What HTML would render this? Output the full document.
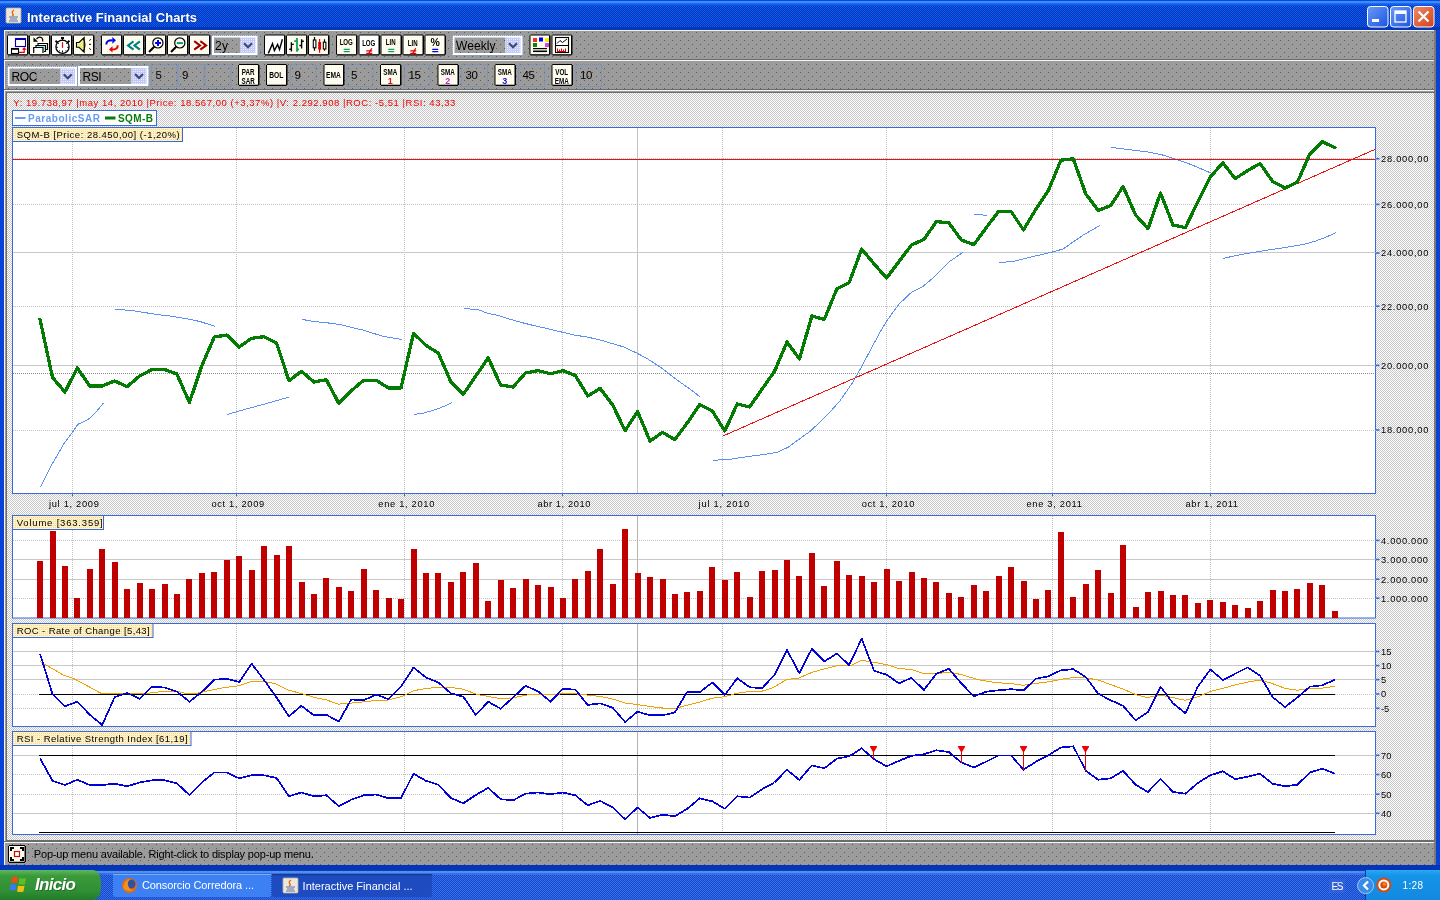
<!DOCTYPE html><html><head><meta charset="utf-8"><title>Interactive Financial Charts</title>
<style>html,body{margin:0;padding:0;width:1440px;height:900px;overflow:hidden;background:#0842d8}svg{position:absolute;left:0;top:0;display:block;will-change:transform}text{font-family:"Liberation Sans",sans-serif;}</style></head><body>
<svg width="1440" height="900" viewBox="0 0 1440 900">
<defs>
<pattern id="tb" width="8" height="8" patternUnits="userSpaceOnUse"><rect width="8" height="8" fill="#9b9b9b"/><rect x="0" y="0" width="1" height="1" fill="#5a5a5a"/><rect x="4" y="4" width="1" height="1" fill="#5a5a5a"/></pattern>
<pattern id="lt" width="2" height="2" patternUnits="userSpaceOnUse"><rect width="2" height="2" fill="#ffffff"/><rect x="0" y="0" width="1" height="1" fill="#c6c6c6"/><rect x="1" y="1" width="1" height="1" fill="#c6c6c6"/></pattern>
<pattern id="cr" width="2" height="2" patternUnits="userSpaceOnUse"><rect width="2" height="2" fill="#ffffff"/><rect x="1" y="1" width="1" height="1" fill="#fdf8c0"/></pattern>
<pattern id="lb" width="2" height="2" patternUnits="userSpaceOnUse"><rect width="2" height="2" fill="#fff2c4"/><rect x="1" y="1" width="1" height="1" fill="#f5d9a0"/></pattern>
<pattern id="lv" width="2" height="2" patternUnits="userSpaceOnUse"><rect width="2" height="2" fill="#c4c8f4"/><rect x="1" y="1" width="1" height="1" fill="#e8ecff"/></pattern>
<linearGradient id="title" x1="0" y1="0" x2="0" y2="1"><stop offset="0" stop-color="#3d8cf5"/><stop offset="0.12" stop-color="#0a5ce8"/><stop offset="0.5" stop-color="#0650e0"/><stop offset="0.85" stop-color="#0a56e6"/><stop offset="1" stop-color="#0846d0"/></linearGradient>
<linearGradient id="task" x1="0" y1="0" x2="0" y2="1"><stop offset="0" stop-color="#3f8cf3"/><stop offset="0.15" stop-color="#2863e0"/><stop offset="0.6" stop-color="#245edb"/><stop offset="1" stop-color="#1d50c8"/></linearGradient>
<linearGradient id="start" x1="0" y1="0" x2="0" y2="1"><stop offset="0" stop-color="#5fb85f"/><stop offset="0.2" stop-color="#3a9a3a"/><stop offset="0.7" stop-color="#2f8f35"/><stop offset="1" stop-color="#237a28"/></linearGradient>
<linearGradient id="tray" x1="0" y1="0" x2="0" y2="1"><stop offset="0" stop-color="#2aa8f0"/><stop offset="0.2" stop-color="#1494e8"/><stop offset="1" stop-color="#1289e0"/></linearGradient>
<linearGradient id="btnb" x1="0" y1="0" x2="1" y2="1"><stop offset="0" stop-color="#6a9af8"/><stop offset="1" stop-color="#1c54e0"/></linearGradient>
<linearGradient id="btnr" x1="0" y1="0" x2="1" y2="1"><stop offset="0" stop-color="#f08a6a"/><stop offset="1" stop-color="#d24018"/></linearGradient>
<pattern id="tp" width="2" height="2" patternUnits="userSpaceOnUse"><rect width="2" height="2" fill="#0a5cf4"/><rect x="1" y="0" width="1" height="1" fill="#0434b4"/><rect x="0" y="1" width="1" height="1" fill="#0434b4"/></pattern>
<pattern id="kp" width="2" height="2" patternUnits="userSpaceOnUse"><rect width="2" height="2" fill="#3470ec"/><rect x="1" y="0" width="1" height="1" fill="#1848c8"/><rect x="0" y="1" width="1" height="1" fill="#1848c8"/></pattern>
</defs>
<rect x="0" y="0" width="1440" height="870" fill="#0842d8"/>
<rect x="0" y="0" width="1440" height="30" fill="url(#tp)"/>
<rect x="0" y="0" width="1440" height="1" fill="#0a48d8"/>
<rect x="0" y="1" width="1440" height="2.5" fill="#3a8cff"/>
<rect x="0" y="3.5" width="1440" height="2" fill="#1a6af8" opacity="0.6"/>
<rect x="0" y="27" width="1440" height="3" fill="#0436b8"/>
<rect x="6" y="8" width="15" height="15" rx="1" fill="#ece8dc" stroke="#b8b0a0" stroke-width="0.8"/>
<path d="M14 10 q-3 2 -1 4 q1 1 -1 2" stroke="#e06010" stroke-width="1.3" fill="none"/>
<path d="M9 17 h9 M10 19 h7 M9 21 h9" stroke="#5060a0" stroke-width="0.9"/>
<text x="28" y="22" font-size="13" font-weight="bold" fill="#0a2a80" opacity="0.6" textLength="170" lengthAdjust="spacing">Interactive Financial Charts</text>
<text x="27" y="21.5" font-size="13" font-weight="bold" fill="#ffffff" textLength="170" lengthAdjust="spacing">Interactive Financial Charts</text>
<rect x="1367.5" y="6.5" width="20.5" height="20.5" rx="3" fill="url(#btnb)" stroke="#ffffff" stroke-width="1"/>
<rect x="1390.5" y="6.5" width="20.5" height="20.5" rx="3" fill="url(#btnb)" stroke="#ffffff" stroke-width="1"/>
<rect x="1413.5" y="6.5" width="20.5" height="20.5" rx="3" fill="url(#btnr)" stroke="#ffffff" stroke-width="1"/>
<rect x="1372" y="19" width="7" height="3" fill="#fff"/>
<rect x="1395" y="11" width="11" height="11" fill="none" stroke="#fff" stroke-width="1.3"/><rect x="1395" y="11" width="11" height="3" fill="#fff"/>
<path d="M1418.5 11.5 L1428.5 21.5 M1428.5 11.5 L1418.5 21.5" stroke="#fff" stroke-width="2.2"/>
<rect x="4" y="30" width="1432" height="835" fill="url(#tb)"/>
<rect x="4" y="30" width="1432" height="1" fill="#f4f4f4"/>
<rect x="4" y="30" width="1" height="835" fill="#f4f4f4"/>
<rect x="4" y="59" width="1432" height="1" fill="#6c6c6c"/>
<rect x="4" y="60" width="1432" height="1" fill="#f4f4f4"/>
<rect x="4" y="89" width="1432" height="1" fill="#6c6c6c"/>
<rect x="4" y="90" width="1432" height="1" fill="#f4f4f4"/>
<rect x="6" y="92" width="1429" height="749" fill="#6c6c6c"/>
<rect x="7" y="93" width="1427" height="747" fill="url(#lt)"/>
<rect x="4" y="841" width="1432" height="1" fill="#6c6c6c"/>
<rect x="4" y="842" width="1432" height="1" fill="#f4f4f4"/>
<rect x="1434" y="30" width="2" height="835" fill="#7a7a7a"/>
<path d="M8 34.5 H27.5 V35.5 H28.5 V54.5 H27.5 V55.5 H8 V54.5 H7 V35.5 H8z" fill="#000"/>
<rect x="8" y="35.5" width="19.0" height="18.7" fill="#ffffff"/>
<path d="M30 34.5 H49.5 V35.5 H50.5 V54.5 H49.5 V55.5 H30 V54.5 H29 V35.5 H30z" fill="#000"/>
<rect x="30" y="35.5" width="19.0" height="18.7" fill="url(#cr)"/>
<path d="M52 34.5 H71.5 V35.5 H72.5 V54.5 H71.5 V55.5 H52 V54.5 H51 V35.5 H52z" fill="#000"/>
<rect x="52" y="35.5" width="19.0" height="18.7" fill="#ffffff"/>
<path d="M74 34.5 H93.5 V35.5 H94.5 V54.5 H93.5 V55.5 H74 V54.5 H73 V35.5 H74z" fill="#000"/>
<rect x="74" y="35.5" width="19.0" height="18.7" fill="url(#cr)"/>
<path d="M102 34.5 H121.5 V35.5 H122.5 V54.5 H121.5 V55.5 H102 V54.5 H101 V35.5 H102z" fill="#000"/>
<rect x="102" y="35.5" width="19.0" height="18.7" fill="url(#cr)"/>
<path d="M124 34.5 H143.5 V35.5 H144.5 V54.5 H143.5 V55.5 H124 V54.5 H123 V35.5 H124z" fill="#000"/>
<rect x="124" y="35.5" width="19.0" height="18.7" fill="url(#cr)"/>
<path d="M146 34.5 H165.5 V35.5 H166.5 V54.5 H165.5 V55.5 H146 V54.5 H145 V35.5 H146z" fill="#000"/>
<rect x="146" y="35.5" width="19.0" height="18.7" fill="url(#cr)"/>
<path d="M168 34.5 H187.5 V35.5 H188.5 V54.5 H187.5 V55.5 H168 V54.5 H167 V35.5 H168z" fill="#000"/>
<rect x="168" y="35.5" width="19.0" height="18.7" fill="url(#cr)"/>
<path d="M190 34.5 H209.5 V35.5 H210.5 V54.5 H209.5 V55.5 H190 V54.5 H189 V35.5 H190z" fill="#000"/>
<rect x="190" y="35.5" width="19.0" height="18.7" fill="url(#cr)"/>
<rect x="15.5" y="38.5" width="10" height="8" fill="#fff" stroke="#0000b0" stroke-width="1.1"/><rect x="15" y="38" width="11" height="2" fill="#0000b0"/>
<rect x="11.5" y="48.5" width="7" height="5" fill="#fff" stroke="#000" stroke-width="1.1"/><rect x="11" y="48" width="8" height="1.8" fill="#000"/>
<path d="M19 52.3 H24.2 V48.5" stroke="#e00000" stroke-width="1.2" fill="none"/><path d="M22 49.8 L24.2 47 L26.6 49.8z" fill="#e00000"/>
<path d="M33.5 37.2 V41.7 H38z" fill="#000"/><path d="M36.5 39 Q39 36 42 38 Q43 39 42.7 41.6" stroke="#000" stroke-width="1.2" fill="none"/>
<path d="M38 49.5 V43.5 H47.5 V49.5 H46" stroke="#000" stroke-width="1.2" fill="none"/>
<path d="M36 51.5 V45.5 H45.5 V51.5 H44" stroke="#000" stroke-width="1.2" fill="#fff"/><path d="M37.5 46.8 H44.2 V50.5" stroke="#50f0f0" stroke-width="1" fill="none"/>
<path d="M33.7 52.9 V47.5 H43 V52.9" stroke="#000" stroke-width="1.2" fill="#fff"/>
<circle cx="62.5" cy="46.8" r="6.6" fill="#fff" stroke="#000" stroke-width="1.3"/>
<rect x="61" y="37" width="3" height="2" fill="#000"/><path d="M62.5 39 V40.5" stroke="#000" stroke-width="1"/>
<path d="M55.5 40.8 L57.8 42.8 M69.5 40.8 L67.2 42.8" stroke="#000" stroke-width="1.8"/>
<path d="M62.5 42.2 V47.8" stroke="#f00000" stroke-width="1.2"/>
<path d="M56 47.3 H57.8 M67.2 47.3 H69 M62.5 50.5 V52.3 M58.2 43.5 h0.8 M66 43.5 h0.8 M59 50.8 h0.8 M65.5 50.8 h0.8" stroke="#000" stroke-width="1"/>
<path d="M76.5 42.5 H79 L84.2 37.6 V52.2 L79 47.3 H76.5z" fill="#f0f080" stroke="#000" stroke-width="1.1"/>
<path d="M83 38 Q87 44.8 83 51.8" stroke="#000" stroke-width="1" fill="none"/>
<path d="M89.3 40.6 L90.9 39.3 M89 44.3 H91 M89.3 48.3 L90.9 49.7" stroke="#000" stroke-width="1"/>
<path d="M106.4 44.5 Q106 40.2 112.5 40.3" stroke="#0000f0" stroke-width="2" fill="none"/><path d="M112.3 37 L116 40.3 L112.3 43.7z" fill="#0000f0"/>
<path d="M117.7 45.2 Q118 49.5 112 49.5" stroke="#f00000" stroke-width="2" fill="none"/><path d="M112.5 46 L109 49.4 L112.5 52.6z" fill="#f00000"/>
<path d="M133.5 41.3 L128 45.4 L133.5 49.7 M139.9 41.3 L134.4 45.4 L139.9 49.7" stroke="#008080" stroke-width="2.1" fill="none" stroke-linejoin="miter"/>
<circle cx="157.9" cy="42.9" r="5.1" fill="#fff" stroke="#000" stroke-width="1.2"/><path d="M149 52 L154.2 46.8" stroke="#000" stroke-width="2"/><path d="M155.1 43.1 H161 M158 40 V45.9" stroke="#0000f0" stroke-width="2"/>
<circle cx="179.8" cy="42.9" r="5.1" fill="#fff" stroke="#000" stroke-width="1.2"/><path d="M171 52 L176.2 46.8" stroke="#000" stroke-width="2"/><path d="M176.8 43.1 H182.9" stroke="#10a050" stroke-width="2"/>
<path d="M194.2 41.2 L200 45.4 L194.2 49.7 M200.3 41.2 L206.1 45.4 L200.3 49.7" stroke="#a00000" stroke-width="2.1" fill="none"/>
<rect x="212" y="35.5" width="45.5" height="19.5" fill="#ffffff"/>
<rect x="211.5" y="35.0" width="46.5" height="20.5" fill="none" stroke="#7aa0d8" stroke-width="1" stroke-dasharray="1 1" shape-rendering="crispEdges"/>
<rect x="214" y="37.5" width="26.5" height="15.5" fill="url(#tb)"/>
<rect x="240.5" y="37.5" width="15.0" height="15.5" fill="url(#lv)"/>
<path d="M244.0 43.25 L248.0 47.25 L252.0 43.25" stroke="#3c4a78" stroke-width="2.2" fill="none"/>
<text x="215" y="49.5" font-size="12" fill="#000" font-weight="normal" text-anchor="start" textLength="13" lengthAdjust="spacing">2y</text>
<path d="M265 34.5 H284.5 V35.5 H285.5 V54.5 H284.5 V55.5 H265 V54.5 H264 V35.5 H265z" fill="#000"/>
<rect x="265" y="35.5" width="19.0" height="18.7" fill="#ffffff"/>
<path d="M287 34.5 H306.5 V35.5 H307.5 V54.5 H306.5 V55.5 H287 V54.5 H286 V35.5 H287z" fill="#000"/>
<rect x="287" y="35.5" width="19.0" height="18.7" fill="url(#cr)"/>
<path d="M309 34.5 H328.5 V35.5 H329.5 V54.5 H328.5 V55.5 H309 V54.5 H308 V35.5 H309z" fill="#000"/>
<rect x="309" y="35.5" width="19.0" height="18.7" fill="url(#cr)"/>
<path d="M337 34.5 H356.5 V35.5 H357.5 V54.5 H356.5 V55.5 H337 V54.5 H336 V35.5 H337z" fill="#000"/>
<rect x="337" y="35.5" width="19.0" height="18.7" fill="url(#cr)"/>
<path d="M359.5 34.5 H379 V35.5 H380 V54.5 H379 V55.5 H359.5 V54.5 H358.5 V35.5 H359.5z" fill="#000"/>
<rect x="359.5" y="35.5" width="19.0" height="18.7" fill="#ffffff"/>
<path d="M381.5 34.5 H401 V35.5 H402 V54.5 H401 V55.5 H381.5 V54.5 H380.5 V35.5 H381.5z" fill="#000"/>
<rect x="381.5" y="35.5" width="19.0" height="18.7" fill="url(#cr)"/>
<path d="M403.5 34.5 H423 V35.5 H424 V54.5 H423 V55.5 H403.5 V54.5 H402.5 V35.5 H403.5z" fill="#000"/>
<rect x="403.5" y="35.5" width="19.0" height="18.7" fill="url(#cr)"/>
<path d="M425.5 34.5 H445 V35.5 H446 V54.5 H445 V55.5 H425.5 V54.5 H424.5 V35.5 H425.5z" fill="#000"/>
<rect x="425.5" y="35.5" width="19.0" height="18.7" fill="url(#cr)"/>
<polyline points="268.3,53.4 272.5,43.7 274.4,50.5 277.6,44.4 279.5,49.5 282.4,39.3" stroke="#000" stroke-width="1.4" fill="none"/>
<path d="M291.4 42.2 V51.4 M289.2 49.3 H291.4 M291.4 44.4 H293.8 M301.6 39.3 V48.5 M299.4 45.5 H301.6 M301.6 41.2 H303.8" stroke="#000" stroke-width="1.4"/>
<path d="M297 38.1 V51.7 M294.2 41.2 H297 M297 49.3 H299" stroke="#10a050" stroke-width="1.8"/>
<path d="M314.5 37.1 V50.7 M324.5 39.3 V50.7" stroke="#000" stroke-width="1.2"/><path d="M319.6 39 V52.7" stroke="#e00000" stroke-width="1.2"/>
<rect x="313.3" y="40" width="2.6" height="7.8" fill="#fff" stroke="#000" stroke-width="1.1"/><rect x="318.2" y="42" width="2.9" height="7.7" fill="#e00000"/><rect x="323.3" y="42.2" width="2.6" height="6.8" fill="#fff" stroke="#000" stroke-width="1.1"/>
<text transform="translate(346.25 44.9) scale(0.72 1)" font-size="8.5" font-weight="bold" text-anchor="middle" fill="#000">LOG</text>
<path d="M343.75 49.3 h6 M343.75 51.7 h6" stroke="#10a050" stroke-width="1.3"/>
<text transform="translate(368.75 45.9) scale(0.72 1)" font-size="8.5" font-weight="bold" text-anchor="middle" fill="#000">LOG</text>
<path d="M366.25 50.8 h6 M366.25 53.5 h6" stroke="#e00000" stroke-width="1.3"/>
<path d="M371.75 48.3 L368.75 53.6" stroke="#e00000" stroke-width="1.2"/>
<text transform="translate(390.75 44.9) scale(0.72 1)" font-size="8.5" font-weight="bold" text-anchor="middle" fill="#000">LIN</text>
<path d="M388.25 49.3 h6 M388.25 51.7 h6" stroke="#10a050" stroke-width="1.3"/>
<text transform="translate(412.75 45.9) scale(0.72 1)" font-size="8.5" font-weight="bold" text-anchor="middle" fill="#000">LIN</text>
<path d="M410.25 50.8 h6 M410.25 53.5 h6" stroke="#e00000" stroke-width="1.3"/>
<path d="M415.75 48.3 L412.75 53.6" stroke="#e00000" stroke-width="1.2"/>
<text x="435.25" y="45.5" font-size="10.5" fill="#000" font-weight="bold" text-anchor="middle">%</text>
<path d="M432.25 49.3 h6 M432.25 51.7 h6" stroke="#0000f0" stroke-width="1.3"/>
<rect x="452.5" y="35.5" width="70.0" height="19.5" fill="#ffffff"/>
<rect x="452.0" y="35.0" width="71.0" height="20.5" fill="none" stroke="#7aa0d8" stroke-width="1" stroke-dasharray="1 1" shape-rendering="crispEdges"/>
<rect x="454.5" y="37.5" width="51.0" height="15.5" fill="url(#tb)"/>
<rect x="505.5" y="37.5" width="15.0" height="15.5" fill="url(#lv)"/>
<path d="M509.0 43.25 L513.0 47.25 L517.0 43.25" stroke="#3c4a78" stroke-width="2.2" fill="none"/>
<text x="456" y="50" font-size="12" fill="#000" font-weight="normal" text-anchor="start" textLength="39.5" lengthAdjust="spacing">Weekly</text>
<path d="M530.5 34.5 H549.5 V35.5 H550.5 V54.5 H549.5 V55.5 H530.5 V54.5 H529.5 V35.5 H530.5z" fill="#000"/>
<rect x="530.5" y="35.5" width="18.5" height="18.7" fill="url(#cr)"/>
<rect x="533" y="38" width="4" height="4" fill="#f03030"/><rect x="539" y="37.5" width="4" height="4" fill="#0000f0"/><rect x="545" y="38" width="4" height="4" fill="#f0f000"/><rect x="533" y="43" width="4" height="4" fill="#108010"/><rect x="545" y="43" width="4" height="4" fill="#e040f0"/>
<rect x="533" y="48" width="14" height="1.2" fill="#000"/><rect x="533" y="50.5" width="14" height="1.6" fill="#000"/>
<path d="M552.5 34.5 H571.5 V35.5 H572.5 V54.5 H571.5 V55.5 H552.5 V54.5 H551.5 V35.5 H552.5z" fill="#000"/>
<rect x="552.5" y="35.5" width="18.5" height="18.7" fill="url(#cr)"/>
<rect x="555.5" y="37.5" width="13" height="15" fill="#fff" stroke="#000" stroke-width="1.1"/><path d="M555.5 45.5 h13" stroke="#000" stroke-width="1"/><path d="M557 43.5 l3 -3 l2.5 2 l4.5 -3.5" stroke="#000" stroke-width="1" fill="none"/><path d="M557.5 51.5 v-3 M559.5 51.5 v-2 M561.5 51.5 v-3 M563.5 51.5 v-2 M565.5 51.5 v-3 M557 51.5 h9" stroke="#e00000" stroke-width="1"/>
<rect x="7.5" y="66.5" width="69.5" height="19.5" fill="#ffffff"/>
<rect x="7.0" y="66.0" width="70.5" height="20.5" fill="none" stroke="#7aa0d8" stroke-width="1" stroke-dasharray="1 1" shape-rendering="crispEdges"/>
<rect x="9.5" y="68.5" width="51.0" height="15.5" fill="url(#tb)"/>
<rect x="60.5" y="68.5" width="14.5" height="15.5" fill="url(#lv)"/>
<path d="M63.75 74.25 L67.75 78.25 L71.75 74.25" stroke="#3c4a78" stroke-width="2.2" fill="none"/>
<text x="11.5" y="80.6" font-size="12" fill="#000" font-weight="normal" text-anchor="start" textLength="26" lengthAdjust="spacing">ROC</text>
<rect x="78" y="66" width="70.5" height="20" fill="#ffffff"/>
<rect x="77.5" y="65.5" width="71.5" height="21" fill="none" stroke="#7aa0d8" stroke-width="1" stroke-dasharray="1 1" shape-rendering="crispEdges"/>
<rect x="80" y="68" width="51.5" height="16" fill="url(#tb)"/>
<rect x="131.5" y="68" width="15.0" height="16" fill="url(#lv)"/>
<path d="M135.0 74.0 L139.0 78.0 L143.0 74.0" stroke="#3c4a78" stroke-width="2.2" fill="none"/>
<text x="82.5" y="80.6" font-size="12" fill="#000" font-weight="normal" text-anchor="start" textLength="19" lengthAdjust="spacing">RSI</text>
<rect x="151.5" y="64.5" width="25.5" height="22" fill="none" stroke="#6a8cc8" stroke-width="1" stroke-dasharray="1 1"/>
<text x="155.5" y="78.8" font-size="11.5" fill="#000" font-weight="normal" text-anchor="start">5</text>
<rect x="178.0" y="64.5" width="26.0" height="22" fill="none" stroke="#6a8cc8" stroke-width="1" stroke-dasharray="1 1"/>
<text x="182.0" y="78.8" font-size="11.5" fill="#000" font-weight="normal" text-anchor="start">9</text>
<rect x="205.0" y="64.5" width="26.0" height="22" fill="none" stroke="#6a8cc8" stroke-width="1" stroke-dasharray="1 1"/>
<path d="M239 64 H258.5 V65 H259.5 V85 H258.5 V86 H239 V85 H238 V65 H239z" fill="#000"/>
<rect x="239" y="65" width="19.0" height="19.7" fill="url(#cr)"/>
<text transform="translate(248.25 74.8) scale(0.7 1)" font-size="9" font-weight="bold" text-anchor="middle" fill="#000">PAR</text>
<text transform="translate(248.25 83.5) scale(0.7 1)" font-size="9" font-weight="bold" text-anchor="middle" fill="#000">SAR</text>
<path d="M267 64 H286.5 V65 H287.5 V85 H286.5 V86 H267 V85 H266 V65 H267z" fill="#000"/>
<rect x="267" y="65" width="19.0" height="19.7" fill="url(#cr)"/>
<text transform="translate(276.25 77.9) scale(0.7 1)" font-size="9.5" font-weight="bold" text-anchor="middle" fill="#000">BOL</text>
<rect x="290.5" y="64.5" width="25.5" height="22" fill="none" stroke="#6a8cc8" stroke-width="1" stroke-dasharray="1 1"/>
<text x="294.5" y="78.8" font-size="11.5" fill="#000" font-weight="normal" text-anchor="start">9</text>
<path d="M324.5 64 H343.5 V65 H344.5 V85 H343.5 V86 H324.5 V85 H323.5 V65 H324.5z" fill="#000"/>
<rect x="324.5" y="65" width="18.5" height="19.7" fill="url(#cr)"/>
<text transform="translate(333.5 77.9) scale(0.7 1)" font-size="9.5" font-weight="bold" text-anchor="middle" fill="#000">EMA</text>
<rect x="347.0" y="64.5" width="26.0" height="22" fill="none" stroke="#6a8cc8" stroke-width="1" stroke-dasharray="1 1"/>
<text x="351.0" y="78.8" font-size="11.5" fill="#000" font-weight="normal" text-anchor="start">5</text>
<path d="M381 64 H400.5 V65 H401.5 V85 H400.5 V86 H381 V85 H380 V65 H381z" fill="#000"/>
<rect x="381" y="65" width="19.0" height="19.7" fill="url(#cr)"/>
<text transform="translate(390.25 74.8) scale(0.7 1)" font-size="9" font-weight="bold" text-anchor="middle" fill="#000">SMA</text>
<text transform="translate(390.25 83.5) scale(1.0 1)" font-size="9" font-weight="bold" text-anchor="middle" fill="#e01010">1</text>
<rect x="404.5" y="64.5" width="25.5" height="22" fill="none" stroke="#6a8cc8" stroke-width="1" stroke-dasharray="1 1"/>
<text x="408.5" y="78.8" font-size="11.5" fill="#000" font-weight="normal" text-anchor="start" textLength="12.5" lengthAdjust="spacing">15</text>
<path d="M438.5 64 H458 V65 H459 V85 H458 V86 H438.5 V85 H437.5 V65 H438.5z" fill="#000"/>
<rect x="438.5" y="65" width="19.0" height="19.7" fill="url(#cr)"/>
<text transform="translate(447.75 74.8) scale(0.7 1)" font-size="9" font-weight="bold" text-anchor="middle" fill="#000">SMA</text>
<text transform="translate(447.75 83.5) scale(1.0 1)" font-size="9" font-weight="bold" text-anchor="middle" fill="#d020d0">2</text>
<rect x="461.5" y="64.5" width="26" height="22" fill="none" stroke="#6a8cc8" stroke-width="1" stroke-dasharray="1 1"/>
<text x="465.5" y="78.8" font-size="11.5" fill="#000" font-weight="normal" text-anchor="start" textLength="12.5" lengthAdjust="spacing">30</text>
<path d="M495.5 64 H515 V65 H516 V85 H515 V86 H495.5 V85 H494.5 V65 H495.5z" fill="#000"/>
<rect x="495.5" y="65" width="19.0" height="19.7" fill="url(#cr)"/>
<text transform="translate(504.75 74.8) scale(0.7 1)" font-size="9" font-weight="bold" text-anchor="middle" fill="#000">SMA</text>
<text transform="translate(504.75 83.5) scale(1.0 1)" font-size="9" font-weight="bold" text-anchor="middle" fill="#1010e0">3</text>
<rect x="518.5" y="64.5" width="26" height="22" fill="none" stroke="#6a8cc8" stroke-width="1" stroke-dasharray="1 1"/>
<text x="522.5" y="78.8" font-size="11.5" fill="#000" font-weight="normal" text-anchor="start" textLength="12.5" lengthAdjust="spacing">45</text>
<path d="M552.5 64 H572 V65 H573 V85 H572 V86 H552.5 V85 H551.5 V65 H552.5z" fill="#000"/>
<rect x="552.5" y="65" width="19.0" height="19.7" fill="url(#cr)"/>
<text transform="translate(561.75 74.8) scale(0.7 1)" font-size="9" font-weight="bold" text-anchor="middle" fill="#000">VOL</text>
<text transform="translate(561.75 83.5) scale(0.7 1)" font-size="9" font-weight="bold" text-anchor="middle" fill="#000">EMA</text>
<rect x="576.0" y="64.5" width="25.5" height="22" fill="none" stroke="#6a8cc8" stroke-width="1" stroke-dasharray="1 1"/>
<text x="580.0" y="78.8" font-size="11.5" fill="#000" font-weight="normal" text-anchor="start" textLength="12.5" lengthAdjust="spacing">10</text>
<text x="13.3" y="106" font-size="9.5" fill="#f00000" font-weight="normal" text-anchor="start" textLength="442" lengthAdjust="spacing">Y: 19.738,97 |may 14, 2010 |Price: 18.567,00 (+3,37%) |V: 2.292.908 |ROC: -5,51 |RSI: 43,33</text>
<rect x="12.5" y="110.5" width="144" height="15" fill="#fff" stroke="#3a6ad8" stroke-width="1"/>
<rect x="15" y="117" width="10.5" height="2" fill="#6a9cf0"/>
<text x="28" y="121.8" font-size="10" fill="#6a9cf0" font-weight="bold" text-anchor="start" textLength="72" lengthAdjust="spacing">ParabolicSAR</text>
<rect x="105" y="116.5" width="10.5" height="3" fill="#0a7a0a"/>
<text x="118" y="121.8" font-size="10" fill="#0a7a0a" font-weight="bold" text-anchor="start" textLength="35" lengthAdjust="spacing">SQM-B</text>
<rect x="12.5" y="127.5" width="1363.0" height="366.0" fill="#ffffff" stroke="#3a6ad8" stroke-width="1"/>
<path d="M72.5 128 V493" stroke="#c2c2c2" stroke-width="1" stroke-dasharray="1 1" shape-rendering="crispEdges"/>
<path d="M236.5 128 V493" stroke="#c2c2c2" stroke-width="1" stroke-dasharray="1 1" shape-rendering="crispEdges"/>
<path d="M404.5 128 V493" stroke="#c2c2c2" stroke-width="1" stroke-dasharray="1 1" shape-rendering="crispEdges"/>
<path d="M562.5 128 V493" stroke="#c2c2c2" stroke-width="1" stroke-dasharray="1 1" shape-rendering="crispEdges"/>
<path d="M722.5 128 V493" stroke="#c2c2c2" stroke-width="1" stroke-dasharray="1 1" shape-rendering="crispEdges"/>
<path d="M886.5 128 V493" stroke="#c2c2c2" stroke-width="1" stroke-dasharray="1 1" shape-rendering="crispEdges"/>
<path d="M1052.5 128 V493" stroke="#c2c2c2" stroke-width="1" stroke-dasharray="1 1" shape-rendering="crispEdges"/>
<path d="M1210.5 128 V493" stroke="#c2c2c2" stroke-width="1" stroke-dasharray="1 1" shape-rendering="crispEdges"/>
<path d="M12.5 158.5 H1375.5" stroke="#c2c2c2" stroke-width="1" stroke-dasharray="1 1" shape-rendering="crispEdges"/>
<path d="M12.5 204.5 H1375.5" stroke="#c2c2c2" stroke-width="1" stroke-dasharray="1 1" shape-rendering="crispEdges"/>
<path d="M12.5 252.5 H1375.5" stroke="#c8c8c8" stroke-width="1" shape-rendering="crispEdges"/>
<path d="M12.5 306.5 H1375.5" stroke="#c2c2c2" stroke-width="1" stroke-dasharray="1 1" shape-rendering="crispEdges"/>
<path d="M12.5 365.5 H1375.5" stroke="#c8c8c8" stroke-width="1" shape-rendering="crispEdges"/>
<path d="M12.5 430.5 H1375.5" stroke="#c2c2c2" stroke-width="1" stroke-dasharray="1 1" shape-rendering="crispEdges"/>
<path d="M13 373.5 H1375" stroke="#888888" stroke-width="1" stroke-dasharray="1 1" shape-rendering="crispEdges"/>
<path d="M637.5 128 V493" stroke="#c4c4c4" stroke-width="1"/>
<polyline points="40.6,487.2 45.6,476.7 52.2,463.9 60.0,450.6 64.4,442.8 72.2,432.8 77.8,424.4 83.3,421.7 90.0,418.3 96.7,411.1 103.3,403.3" fill="none" stroke="#5b8ff0" stroke-width="1" shape-rendering="crispEdges"/>
<polyline points="115.0,309.4 130.8,310.4 144.2,312.5 159.2,314.8 169.2,315.8 181.7,317.9 191.7,319.6 200.8,321.8 208.3,324.2 215.4,326.5" fill="none" stroke="#5b8ff0" stroke-width="1" shape-rendering="crispEdges"/>
<polyline points="227.3,414.4 244.4,409.5 262.7,404.6 277.4,400.4 289.6,396.9" fill="none" stroke="#5b8ff0" stroke-width="1" shape-rendering="crispEdges"/>
<polyline points="302.3,319.4 312.3,321.3 321.7,322.3 332.3,323.4 341.7,325.0 352.3,327.7 361.7,329.7 372.3,333.0 383.0,336.3 393.7,338.1 401.7,339.4" fill="none" stroke="#5b8ff0" stroke-width="1" shape-rendering="crispEdges"/>
<polyline points="414.3,414.3 423.0,413.3 435.0,409.7 444.3,406.3 451.7,402.6" fill="none" stroke="#5b8ff0" stroke-width="1" shape-rendering="crispEdges"/>
<polyline points="464.2,308.5 478.3,309.7 487.1,313.1 498.7,315.5 509.4,319.0 521.1,322.4 532.7,325.3 545.4,328.2 561.9,332.1 574.5,335.2 585.0,336.6 598.5,339.5 612.1,343.5 623.8,347.0 637.3,353.3 648.2,359.3 658.1,365.6 668.0,372.9 677.1,380.1 688.8,388.2 700.5,397.2" fill="none" stroke="#5b8ff0" stroke-width="1" shape-rendering="crispEdges"/>
<polyline points="713.2,460.3 731.1,459.1 746.7,456.7 765.3,454.4 777.8,452.1 788.6,447.0 799.5,438.9 810.4,431.1 827.5,414.8 840.0,400.8 852.4,382.9 861.7,366.5 871.1,348.7 880.0,332.3 886.4,321.3 898.9,304.2 911.3,292.5 922.2,287.1 931.5,279.3 937.8,273.1 948.6,262.2 962.6,252.6" fill="none" stroke="#5b8ff0" stroke-width="1" shape-rendering="crispEdges"/>
<polyline points="974.3,214.3 981.3,214.8 986.7,215.6" fill="none" stroke="#5b8ff0" stroke-width="1" shape-rendering="crispEdges"/>
<polyline points="999.3,262.5 1013.3,261.4 1028.9,257.5 1052.2,252.1 1063.1,249.0 1070.9,243.5 1083.3,235.0 1099.6,225.6" fill="none" stroke="#5b8ff0" stroke-width="1" shape-rendering="crispEdges"/>
<polyline points="1110.9,147.4 1131.1,149.9 1146.7,151.8 1162.2,154.9 1174.6,158.8 1187.1,163.0 1199.5,168.1 1211.2,173.2" fill="none" stroke="#5b8ff0" stroke-width="1" shape-rendering="crispEdges"/>
<polyline points="1223.1,258.5 1234.3,255.9 1246.9,253.5 1258.6,251.5 1272.2,249.4 1287.7,247.1 1302.3,244.7 1315.0,241.3 1326.6,236.9 1335.9,232.6" fill="none" stroke="#5b8ff0" stroke-width="1" shape-rendering="crispEdges"/>
<path d="M13 159.5 H1375" stroke="#e81010" stroke-width="1" shape-rendering="crispEdges"/>
<path d="M723 436 L1375 149.4" stroke="#f01010" stroke-width="1" shape-rendering="crispEdges"/>
<polyline points="40.0,319.2 52.5,377.5 64.9,392.0 77.3,368.0 89.8,386.0 102.2,386.0 114.7,381.0 127.1,386.7 139.6,376.0 152.1,369.5 164.5,369.5 176.9,374.0 189.4,402.5 201.8,365.8 214.3,337.0 226.8,335.0 239.2,347.0 251.6,338.3 264.1,336.7 276.5,343.0 289.0,380.8 301.4,371.3 313.9,382.0 326.3,379.7 338.8,403.3 351.2,390.8 363.7,380.3 376.1,380.3 388.6,388.0 401.0,388.0 413.5,333.3 425.9,345.3 438.4,353.3 450.8,381.7 463.3,394.2 475.8,376.0 488.2,357.8 500.6,385.0 513.1,387.0 525.5,373.0 538.0,370.6 550.5,373.8 562.9,370.6 575.4,375.6 587.8,396.0 600.2,388.4 612.7,405.0 625.1,430.7 637.6,411.6 650.0,441.0 662.5,432.4 674.9,439.6 687.4,422.7 699.8,404.5 712.3,411.0 724.8,431.0 737.2,404.0 749.6,407.0 762.1,389.0 774.5,371.4 787.0,342.0 799.4,359.0 811.9,316.0 824.3,319.4 836.8,289.0 849.2,282.5 861.7,249.0 874.1,264.0 886.6,278.0 899.0,261.5 911.5,245.0 923.9,239.4 936.4,221.6 948.8,222.8 961.3,240.0 973.8,244.7 986.2,227.8 998.6,211.4 1011.1,211.4 1023.5,230.0 1036.0,208.9 1048.4,190.4 1060.9,160.2 1073.3,158.8 1085.8,194.0 1098.2,210.4 1110.7,205.6 1123.1,186.5 1135.6,215.0 1148.0,228.7 1160.5,193.0 1173.0,225.0 1185.4,227.6 1197.8,201.8 1210.3,177.0 1222.8,162.7 1235.2,178.7 1247.6,170.5 1260.1,163.6 1272.5,181.3 1285.0,188.0 1297.4,182.2 1309.9,153.8 1322.3,141.7 1334.8,147.6" fill="none" stroke="#047c04" stroke-width="3.3" stroke-linejoin="round" stroke-linecap="round" shape-rendering="crispEdges"/>
<rect x="12.5" y="127.5" width="170.0" height="14.0" fill="url(#lb)" stroke="#3a6ad8" stroke-width="1"/>
<text x="16.7" y="137.9" font-size="9.5" fill="#000" font-weight="normal" text-anchor="start" textLength="163" lengthAdjust="spacing">SQM-B [Price: 28.450,00] (-1,20%)</text>
<path d="M1375.5 158.7 h4" stroke="#3a6ad8" stroke-width="1.6"/>
<text x="1381" y="162.1" font-size="9.3" fill="#000" font-weight="normal" text-anchor="start" textLength="47.3" lengthAdjust="spacing">28.000,00</text>
<path d="M1375.5 204.4 h4" stroke="#3a6ad8" stroke-width="1.6"/>
<text x="1381" y="207.8" font-size="9.3" fill="#000" font-weight="normal" text-anchor="start" textLength="47.3" lengthAdjust="spacing">26.000,00</text>
<path d="M1375.5 253 h4" stroke="#3a6ad8" stroke-width="1.6"/>
<text x="1381" y="256.4" font-size="9.3" fill="#000" font-weight="normal" text-anchor="start" textLength="47.3" lengthAdjust="spacing">24.000,00</text>
<path d="M1375.5 306.2 h4" stroke="#3a6ad8" stroke-width="1.6"/>
<text x="1381" y="309.59999999999997" font-size="9.3" fill="#000" font-weight="normal" text-anchor="start" textLength="47.3" lengthAdjust="spacing">22.000,00</text>
<path d="M1375.5 365.4 h4" stroke="#3a6ad8" stroke-width="1.6"/>
<text x="1381" y="368.79999999999995" font-size="9.3" fill="#000" font-weight="normal" text-anchor="start" textLength="47.3" lengthAdjust="spacing">20.000,00</text>
<path d="M1375.5 430 h4" stroke="#3a6ad8" stroke-width="1.6"/>
<text x="1381" y="433.4" font-size="9.3" fill="#000" font-weight="normal" text-anchor="start" textLength="47.3" lengthAdjust="spacing">18.000,00</text>
<path d="M72.5 493.5 v3" stroke="#3a6ad8" stroke-width="1"/>
<text x="48.9" y="507" font-size="9.3" fill="#000" font-weight="normal" text-anchor="start" textLength="50" lengthAdjust="spacing">jul 1, 2009</text>
<path d="M236.5 493.5 v3" stroke="#3a6ad8" stroke-width="1"/>
<text x="211.4" y="507" font-size="9.3" fill="#000" font-weight="normal" text-anchor="start" textLength="52.8" lengthAdjust="spacing">oct 1, 2009</text>
<path d="M404.5 493.5 v3" stroke="#3a6ad8" stroke-width="1"/>
<text x="378.3" y="507" font-size="9.3" fill="#000" font-weight="normal" text-anchor="start" textLength="56" lengthAdjust="spacing">ene 1, 2010</text>
<path d="M562.5 493.5 v3" stroke="#3a6ad8" stroke-width="1"/>
<text x="537.5" y="507" font-size="9.3" fill="#000" font-weight="normal" text-anchor="start" textLength="52.8" lengthAdjust="spacing">abr 1, 2010</text>
<path d="M722.5 493.5 v3" stroke="#3a6ad8" stroke-width="1"/>
<text x="698.6" y="507" font-size="9.3" fill="#000" font-weight="normal" text-anchor="start" textLength="50.6" lengthAdjust="spacing">jul 1, 2010</text>
<path d="M886.5 493.5 v3" stroke="#3a6ad8" stroke-width="1"/>
<text x="861.7" y="507" font-size="9.3" fill="#000" font-weight="normal" text-anchor="start" textLength="52.7" lengthAdjust="spacing">oct 1, 2010</text>
<path d="M1052.5 493.5 v3" stroke="#3a6ad8" stroke-width="1"/>
<text x="1026.4" y="507" font-size="9.3" fill="#000" font-weight="normal" text-anchor="start" textLength="55.5" lengthAdjust="spacing">ene 3, 2011</text>
<path d="M1210.5 493.5 v3" stroke="#3a6ad8" stroke-width="1"/>
<text x="1185.6" y="507" font-size="9.3" fill="#000" font-weight="normal" text-anchor="start" textLength="52.4" lengthAdjust="spacing">abr 1, 2011</text>
<rect x="12.5" y="515.5" width="1363.0" height="102.5" fill="#ffffff" stroke="#3a6ad8" stroke-width="1"/>
<path d="M72.5 516 V618" stroke="#c2c2c2" stroke-width="1" stroke-dasharray="1 1" shape-rendering="crispEdges"/>
<path d="M236.5 516 V618" stroke="#c2c2c2" stroke-width="1" stroke-dasharray="1 1" shape-rendering="crispEdges"/>
<path d="M404.5 516 V618" stroke="#c2c2c2" stroke-width="1" stroke-dasharray="1 1" shape-rendering="crispEdges"/>
<path d="M562.5 516 V618" stroke="#c2c2c2" stroke-width="1" stroke-dasharray="1 1" shape-rendering="crispEdges"/>
<path d="M722.5 516 V618" stroke="#c2c2c2" stroke-width="1" stroke-dasharray="1 1" shape-rendering="crispEdges"/>
<path d="M886.5 516 V618" stroke="#c2c2c2" stroke-width="1" stroke-dasharray="1 1" shape-rendering="crispEdges"/>
<path d="M1052.5 516 V618" stroke="#c2c2c2" stroke-width="1" stroke-dasharray="1 1" shape-rendering="crispEdges"/>
<path d="M1210.5 516 V618" stroke="#c2c2c2" stroke-width="1" stroke-dasharray="1 1" shape-rendering="crispEdges"/>
<path d="M12.5 540.5 H1375.5" stroke="#c2c2c2" stroke-width="1" stroke-dasharray="1 1" shape-rendering="crispEdges"/>
<path d="M12.5 559.5 H1375.5" stroke="#c8c8c8" stroke-width="1" shape-rendering="crispEdges"/>
<path d="M12.5 579.5 H1375.5" stroke="#c8c8c8" stroke-width="1" shape-rendering="crispEdges"/>
<path d="M12.5 598.5 H1375.5" stroke="#c2c2c2" stroke-width="1" stroke-dasharray="1 1" shape-rendering="crispEdges"/>
<path d="M637.5 516 V618" stroke="#b4b4b4" stroke-width="1"/>
<rect x="37" y="561" width="6" height="57" fill="#c00000"/>
<rect x="50" y="531" width="6" height="87" fill="#c00000"/>
<rect x="62" y="566" width="6" height="52" fill="#c00000"/>
<rect x="74" y="598" width="6" height="20" fill="#c00000"/>
<rect x="87" y="569" width="6" height="49" fill="#c00000"/>
<rect x="99" y="549" width="6" height="69" fill="#c00000"/>
<rect x="112" y="562" width="6" height="56" fill="#c00000"/>
<rect x="124" y="589" width="6" height="29" fill="#c00000"/>
<rect x="137" y="583" width="6" height="35" fill="#c00000"/>
<rect x="149" y="589" width="6" height="29" fill="#c00000"/>
<rect x="162" y="584" width="6" height="34" fill="#c00000"/>
<rect x="174" y="594" width="6" height="24" fill="#c00000"/>
<rect x="186" y="579" width="6" height="39" fill="#c00000"/>
<rect x="199" y="573" width="6" height="45" fill="#c00000"/>
<rect x="211" y="572" width="6" height="46" fill="#c00000"/>
<rect x="224" y="560" width="6" height="58" fill="#c00000"/>
<rect x="236" y="556" width="6" height="62" fill="#c00000"/>
<rect x="249" y="570" width="6" height="48" fill="#c00000"/>
<rect x="261" y="546" width="6" height="72" fill="#c00000"/>
<rect x="274" y="555" width="6" height="63" fill="#c00000"/>
<rect x="286" y="546" width="6" height="72" fill="#c00000"/>
<rect x="299" y="582" width="6" height="36" fill="#c00000"/>
<rect x="311" y="594" width="6" height="24" fill="#c00000"/>
<rect x="323" y="578" width="6" height="40" fill="#c00000"/>
<rect x="336" y="587" width="6" height="31" fill="#c00000"/>
<rect x="348" y="591" width="6" height="27" fill="#c00000"/>
<rect x="361" y="569" width="6" height="49" fill="#c00000"/>
<rect x="373" y="590" width="6" height="28" fill="#c00000"/>
<rect x="386" y="598" width="6" height="20" fill="#c00000"/>
<rect x="398" y="599" width="6" height="19" fill="#c00000"/>
<rect x="411" y="549" width="6" height="69" fill="#c00000"/>
<rect x="423" y="573" width="6" height="45" fill="#c00000"/>
<rect x="435" y="573" width="6" height="45" fill="#c00000"/>
<rect x="448" y="582" width="6" height="36" fill="#c00000"/>
<rect x="460" y="572" width="6" height="46" fill="#c00000"/>
<rect x="473" y="563" width="6" height="55" fill="#c00000"/>
<rect x="485" y="601" width="6" height="17" fill="#c00000"/>
<rect x="498" y="580" width="6" height="38" fill="#c00000"/>
<rect x="510" y="588" width="6" height="30" fill="#c00000"/>
<rect x="523" y="579" width="6" height="39" fill="#c00000"/>
<rect x="535" y="585" width="6" height="33" fill="#c00000"/>
<rect x="548" y="587" width="6" height="31" fill="#c00000"/>
<rect x="560" y="598" width="6" height="20" fill="#c00000"/>
<rect x="572" y="579" width="6" height="39" fill="#c00000"/>
<rect x="585" y="571" width="6" height="47" fill="#c00000"/>
<rect x="597" y="549" width="6" height="69" fill="#c00000"/>
<rect x="610" y="584" width="6" height="34" fill="#c00000"/>
<rect x="622" y="529" width="6" height="89" fill="#c00000"/>
<rect x="635" y="573" width="6" height="45" fill="#c00000"/>
<rect x="647" y="577" width="6" height="41" fill="#c00000"/>
<rect x="660" y="579" width="6" height="39" fill="#c00000"/>
<rect x="672" y="594" width="6" height="24" fill="#c00000"/>
<rect x="684" y="592" width="6" height="26" fill="#c00000"/>
<rect x="697" y="591" width="6" height="27" fill="#c00000"/>
<rect x="709" y="567" width="6" height="51" fill="#c00000"/>
<rect x="722" y="580" width="6" height="38" fill="#c00000"/>
<rect x="734" y="572" width="6" height="46" fill="#c00000"/>
<rect x="747" y="597" width="6" height="21" fill="#c00000"/>
<rect x="759" y="571" width="6" height="47" fill="#c00000"/>
<rect x="772" y="570" width="6" height="48" fill="#c00000"/>
<rect x="784" y="560" width="6" height="58" fill="#c00000"/>
<rect x="796" y="576" width="6" height="42" fill="#c00000"/>
<rect x="809" y="553" width="6" height="65" fill="#c00000"/>
<rect x="821" y="586" width="6" height="32" fill="#c00000"/>
<rect x="834" y="561" width="6" height="57" fill="#c00000"/>
<rect x="846" y="575" width="6" height="43" fill="#c00000"/>
<rect x="859" y="576" width="6" height="42" fill="#c00000"/>
<rect x="871" y="582" width="6" height="36" fill="#c00000"/>
<rect x="884" y="569" width="6" height="49" fill="#c00000"/>
<rect x="896" y="581" width="6" height="37" fill="#c00000"/>
<rect x="909" y="572" width="6" height="46" fill="#c00000"/>
<rect x="921" y="578" width="6" height="40" fill="#c00000"/>
<rect x="933" y="582" width="6" height="36" fill="#c00000"/>
<rect x="946" y="593" width="6" height="25" fill="#c00000"/>
<rect x="958" y="597" width="6" height="21" fill="#c00000"/>
<rect x="971" y="585" width="6" height="33" fill="#c00000"/>
<rect x="983" y="591" width="6" height="27" fill="#c00000"/>
<rect x="996" y="576" width="6" height="42" fill="#c00000"/>
<rect x="1008" y="567" width="6" height="51" fill="#c00000"/>
<rect x="1021" y="581" width="6" height="37" fill="#c00000"/>
<rect x="1033" y="599" width="6" height="19" fill="#c00000"/>
<rect x="1045" y="590" width="6" height="28" fill="#c00000"/>
<rect x="1058" y="532" width="6" height="86" fill="#c00000"/>
<rect x="1070" y="597" width="6" height="21" fill="#c00000"/>
<rect x="1083" y="584" width="6" height="34" fill="#c00000"/>
<rect x="1095" y="570" width="6" height="48" fill="#c00000"/>
<rect x="1108" y="593" width="6" height="25" fill="#c00000"/>
<rect x="1120" y="545" width="6" height="73" fill="#c00000"/>
<rect x="1133" y="607" width="6" height="11" fill="#c00000"/>
<rect x="1145" y="592" width="6" height="26" fill="#c00000"/>
<rect x="1158" y="591" width="6" height="27" fill="#c00000"/>
<rect x="1170" y="595" width="6" height="23" fill="#c00000"/>
<rect x="1182" y="595" width="6" height="23" fill="#c00000"/>
<rect x="1195" y="603" width="6" height="15" fill="#c00000"/>
<rect x="1207" y="600" width="6" height="18" fill="#c00000"/>
<rect x="1220" y="602" width="6" height="16" fill="#c00000"/>
<rect x="1232" y="605" width="6" height="13" fill="#c00000"/>
<rect x="1245" y="608" width="6" height="10" fill="#c00000"/>
<rect x="1257" y="601" width="6" height="17" fill="#c00000"/>
<rect x="1270" y="590" width="6" height="28" fill="#c00000"/>
<rect x="1282" y="591" width="6" height="27" fill="#c00000"/>
<rect x="1294" y="589" width="6" height="29" fill="#c00000"/>
<rect x="1307" y="583" width="6" height="35" fill="#c00000"/>
<rect x="1319" y="585" width="6" height="33" fill="#c00000"/>
<rect x="1332" y="611" width="6" height="7" fill="#c00000"/>
<rect x="12.5" y="515.5" width="91.0" height="14.0" fill="url(#lb)" stroke="#3a6ad8" stroke-width="1"/>
<text x="16.7" y="525.9" font-size="9.5" fill="#000" font-weight="normal" text-anchor="start" textLength="86" lengthAdjust="spacing">Volume [363.359]</text>
<path d="M1375.5 540.4 h4" stroke="#3a6ad8" stroke-width="1.6"/>
<text x="1381" y="543.8" font-size="9.3" fill="#000" font-weight="normal" text-anchor="start" textLength="47" lengthAdjust="spacing">4.000.000</text>
<path d="M1375.5 559.5 h4" stroke="#3a6ad8" stroke-width="1.6"/>
<text x="1381" y="562.9" font-size="9.3" fill="#000" font-weight="normal" text-anchor="start" textLength="47" lengthAdjust="spacing">3.000.000</text>
<path d="M1375.5 579.2 h4" stroke="#3a6ad8" stroke-width="1.6"/>
<text x="1381" y="582.6" font-size="9.3" fill="#000" font-weight="normal" text-anchor="start" textLength="47" lengthAdjust="spacing">2.000.000</text>
<path d="M1375.5 598.2 h4" stroke="#3a6ad8" stroke-width="1.6"/>
<text x="1381" y="601.6" font-size="9.3" fill="#000" font-weight="normal" text-anchor="start" textLength="47" lengthAdjust="spacing">1.000.000</text>
<rect x="12.5" y="623.5" width="1363.0" height="103.0" fill="#ffffff" stroke="#3a6ad8" stroke-width="1"/>
<path d="M72.5 624 V726" stroke="#c2c2c2" stroke-width="1" stroke-dasharray="1 1" shape-rendering="crispEdges"/>
<path d="M236.5 624 V726" stroke="#c2c2c2" stroke-width="1" stroke-dasharray="1 1" shape-rendering="crispEdges"/>
<path d="M404.5 624 V726" stroke="#c2c2c2" stroke-width="1" stroke-dasharray="1 1" shape-rendering="crispEdges"/>
<path d="M562.5 624 V726" stroke="#c2c2c2" stroke-width="1" stroke-dasharray="1 1" shape-rendering="crispEdges"/>
<path d="M722.5 624 V726" stroke="#c2c2c2" stroke-width="1" stroke-dasharray="1 1" shape-rendering="crispEdges"/>
<path d="M886.5 624 V726" stroke="#c2c2c2" stroke-width="1" stroke-dasharray="1 1" shape-rendering="crispEdges"/>
<path d="M1052.5 624 V726" stroke="#c2c2c2" stroke-width="1" stroke-dasharray="1 1" shape-rendering="crispEdges"/>
<path d="M1210.5 624 V726" stroke="#c2c2c2" stroke-width="1" stroke-dasharray="1 1" shape-rendering="crispEdges"/>
<path d="M12.5 651.5 H1375.5" stroke="#c8c8c8" stroke-width="1" shape-rendering="crispEdges"/>
<path d="M12.5 665.5 H1375.5" stroke="#c8c8c8" stroke-width="1" shape-rendering="crispEdges"/>
<path d="M12.5 679.5 H1375.5" stroke="#c8c8c8" stroke-width="1" shape-rendering="crispEdges"/>
<path d="M12.5 708.5 H1375.5" stroke="#c2c2c2" stroke-width="1" stroke-dasharray="1 1" shape-rendering="crispEdges"/>
<path d="M12.5 694.5 H1375.5" stroke="#c2c2c2" stroke-width="1" stroke-dasharray="1 1" shape-rendering="crispEdges"/>
<path d="M637.5 624 V726" stroke="#b4b4b4" stroke-width="1"/>
<path d="M39 694.5 H1335" stroke="#000" stroke-width="1" shape-rendering="crispEdges"/>
<polyline points="39.7,661.3 63.3,675.0 75.0,679.2 101.7,693.7 145.0,693.7 163.3,691.3 178.3,691.7 186.7,693.7 196.7,693.3 220.0,688.3 238.3,685.8 251.7,681.3 264.0,681.3 275.0,683.7 288.3,690.0 301.7,693.7 315.0,697.5 326.7,700.0 338.3,704.2 351.7,703.0 365.0,701.7 376.7,700.3 388.3,700.0 401.7,696.7 413.3,690.8 426.7,688.3 438.3,687.5 451.7,687.5 463.3,689.2 475.0,693.7 480.0,695.0 498.3,698.3 511.7,698.0 526.7,695.0 541.7,694.7 556.7,694.2 570.0,693.3 586.7,695.0 601.7,696.7 613.3,699.2 625.0,703.0 638.3,704.7 651.7,706.7 665.0,708.3 676.7,708.0 688.3,705.0 700.0,702.0 711.7,698.3 725.0,696.7 736.7,693.3 748.3,691.7 761.7,691.3 773.3,687.5 786.7,679.5 798.3,678.3 811.7,672.5 825.0,668.7 836.7,665.8 850.0,665.8 861.7,660.3 875.0,662.5 886.7,664.7 898.3,668.3 911.7,669.7 923.3,673.3 936.7,673.7 949.2,672.0 961.7,674.7 978.3,679.7 995.0,682.5 1011.7,683.7 1023.3,685.3 1036.7,683.3 1050.0,681.7 1061.7,679.2 1073.3,677.5 1086.7,678.0 1098.3,680.0 1111.7,685.0 1123.3,689.2 1136.7,695.0 1146.7,697.5 1160.8,695.3 1172.5,697.5 1185.0,700.3 1198.3,696.7 1210.8,691.3 1223.3,688.3 1235.0,685.0 1248.3,682.0 1260.0,680.0 1271.7,683.3 1285.0,688.3 1297.5,690.3 1310.0,688.3 1323.3,688.0 1335.0,686.3" fill="none" stroke="#f0a000" stroke-width="1" shape-rendering="crispEdges"/>
<polyline points="40.0,653.7 52.5,694.2 64.9,706.3 77.3,701.7 89.8,714.7 102.2,725.0 114.7,697.0 127.1,693.0 139.6,698.7 152.1,686.7 164.5,687.5 176.9,691.7 189.4,701.7 201.8,692.0 214.3,679.7 226.8,678.7 239.2,682.0 251.6,663.7 264.1,680.0 276.5,697.5 289.0,716.3 301.4,705.8 313.9,715.3 326.3,714.7 338.8,721.7 351.2,699.5 363.7,700.3 376.1,694.5 388.6,699.2 401.0,686.7 413.5,667.5 425.9,677.5 438.4,682.5 450.8,693.3 463.3,696.7 475.8,715.0 488.2,701.7 500.6,708.7 513.1,697.5 525.5,685.8 538.0,691.3 550.5,701.7 562.9,688.7 575.4,689.7 587.8,705.0 600.2,703.3 612.7,707.8 625.1,722.0 637.6,711.7 650.0,715.3 662.5,715.3 674.9,712.5 687.4,691.7 699.8,692.2 712.3,682.5 724.8,695.0 737.2,678.3 749.6,687.2 762.1,688.3 774.5,674.7 787.0,650.0 799.4,673.3 811.9,648.7 824.3,661.3 836.8,653.7 849.2,665.0 861.7,638.7 874.1,670.8 886.6,674.7 899.0,683.3 911.5,677.8 923.9,690.0 936.4,673.7 948.8,668.7 961.3,683.3 973.8,696.3 986.2,691.7 998.6,690.3 1011.1,689.2 1023.5,690.3 1036.0,678.7 1048.4,676.3 1060.9,670.3 1073.3,669.2 1085.8,677.0 1098.2,693.7 1110.7,700.3 1123.1,705.8 1135.6,720.3 1148.0,712.0 1160.5,686.7 1173.0,703.3 1185.4,713.3 1197.8,686.7 1210.3,669.5 1222.8,680.0 1235.2,673.7 1247.6,667.5 1260.1,675.8 1272.5,697.0 1285.0,707.0 1297.4,697.5 1309.9,686.7 1322.3,685.3 1334.8,679.7" fill="none" stroke="#0000d8" stroke-width="1.7" stroke-linejoin="round" shape-rendering="crispEdges"/>
<rect x="12.5" y="623.5" width="140.5" height="14.0" fill="url(#lb)" stroke="#3a6ad8" stroke-width="1"/>
<text x="16.7" y="633.9" font-size="9.5" fill="#000" font-weight="normal" text-anchor="start" textLength="133" lengthAdjust="spacing">ROC - Rate of Change [5,43]</text>
<path d="M1375.5 651.5 h4" stroke="#3a6ad8" stroke-width="1.6"/>
<text x="1381" y="654.9" font-size="9.3" fill="#000" font-weight="normal" text-anchor="start">15</text>
<path d="M1375.5 665.6 h4" stroke="#3a6ad8" stroke-width="1.6"/>
<text x="1381" y="669.0" font-size="9.3" fill="#000" font-weight="normal" text-anchor="start">10</text>
<path d="M1375.5 679.6 h4" stroke="#3a6ad8" stroke-width="1.6"/>
<text x="1381" y="683.0" font-size="9.3" fill="#000" font-weight="normal" text-anchor="start">5</text>
<path d="M1375.5 694 h4" stroke="#3a6ad8" stroke-width="1.6"/>
<text x="1381" y="697.4" font-size="9.3" fill="#000" font-weight="normal" text-anchor="start">0</text>
<path d="M1375.5 708.3 h4" stroke="#3a6ad8" stroke-width="1.6"/>
<text x="1381" y="711.6999999999999" font-size="9.3" fill="#000" font-weight="normal" text-anchor="start">-5</text>
<rect x="12.5" y="731.5" width="1363.0" height="103.0" fill="#ffffff" stroke="#3a6ad8" stroke-width="1"/>
<path d="M72.5 732 V834" stroke="#c2c2c2" stroke-width="1" stroke-dasharray="1 1" shape-rendering="crispEdges"/>
<path d="M236.5 732 V834" stroke="#c2c2c2" stroke-width="1" stroke-dasharray="1 1" shape-rendering="crispEdges"/>
<path d="M404.5 732 V834" stroke="#c2c2c2" stroke-width="1" stroke-dasharray="1 1" shape-rendering="crispEdges"/>
<path d="M562.5 732 V834" stroke="#c2c2c2" stroke-width="1" stroke-dasharray="1 1" shape-rendering="crispEdges"/>
<path d="M722.5 732 V834" stroke="#c2c2c2" stroke-width="1" stroke-dasharray="1 1" shape-rendering="crispEdges"/>
<path d="M886.5 732 V834" stroke="#c2c2c2" stroke-width="1" stroke-dasharray="1 1" shape-rendering="crispEdges"/>
<path d="M1052.5 732 V834" stroke="#c2c2c2" stroke-width="1" stroke-dasharray="1 1" shape-rendering="crispEdges"/>
<path d="M1210.5 732 V834" stroke="#c2c2c2" stroke-width="1" stroke-dasharray="1 1" shape-rendering="crispEdges"/>
<path d="M12.5 774.5 H1375.5" stroke="#c2c2c2" stroke-width="1" stroke-dasharray="1 1" shape-rendering="crispEdges"/>
<path d="M12.5 794.5 H1375.5" stroke="#c2c2c2" stroke-width="1" stroke-dasharray="1 1" shape-rendering="crispEdges"/>
<path d="M12.5 813.5 H1375.5" stroke="#c8c8c8" stroke-width="1" shape-rendering="crispEdges"/>
<path d="M12.5 755.5 H1375.5" stroke="#c8c8c8" stroke-width="1" shape-rendering="crispEdges"/>
<path d="M637.5 732 V834" stroke="#b4b4b4" stroke-width="1"/>
<path d="M39 755.5 H1335 M39 832.5 H1335" stroke="#000" stroke-width="1" shape-rendering="crispEdges"/>
<polyline points="40.0,758.3 52.5,780.8 64.9,785.0 77.3,779.7 89.8,785.0 102.2,785.0 114.7,783.7 127.1,786.3 139.6,782.5 152.1,780.3 164.5,780.3 176.9,783.3 189.4,795.0 201.8,782.5 214.3,772.5 226.8,772.5 239.2,778.3 251.6,775.3 264.1,775.3 276.5,778.0 289.0,796.3 301.4,792.5 313.9,796.3 326.3,795.3 338.8,806.2 351.2,799.7 363.7,795.3 376.1,794.5 388.6,798.3 401.0,798.3 413.5,773.7 425.9,780.8 438.4,784.7 450.8,798.0 463.3,803.3 475.8,795.0 488.2,787.8 500.6,799.2 513.1,800.3 525.5,793.7 538.0,792.5 550.5,794.2 562.9,792.5 575.4,795.3 587.8,805.3 600.2,800.8 612.7,807.5 625.1,819.2 637.6,807.5 650.0,818.0 662.5,814.7 674.9,816.3 687.4,808.7 699.8,798.3 712.3,801.3 724.8,808.7 737.2,796.3 749.6,797.5 762.1,789.2 774.5,782.5 787.0,769.7 799.4,780.0 811.9,765.3 824.3,768.3 836.8,758.7 849.2,756.3 861.7,748.3 874.1,759.2 886.6,766.3 899.0,760.8 911.5,755.8 923.9,754.2 936.4,750.3 948.8,752.0 961.3,762.5 973.8,767.5 986.2,761.7 998.6,755.5 1011.1,755.5 1023.5,769.7 1036.0,761.7 1048.4,755.3 1060.9,747.5 1073.3,746.3 1085.8,770.8 1098.2,779.7 1110.7,778.3 1123.1,770.8 1135.6,784.7 1148.0,792.0 1160.5,778.7 1173.0,792.0 1185.4,793.7 1197.8,783.0 1210.3,775.3 1222.8,771.3 1235.2,779.2 1247.6,776.7 1260.1,773.7 1272.5,783.7 1285.0,786.3 1297.4,784.7 1309.9,772.5 1322.3,768.7 1334.8,773.7" fill="none" stroke="#0000d8" stroke-width="1.7" stroke-linejoin="round" shape-rendering="crispEdges"/>
<path d="M873.5 751 V759" stroke="#f00000" stroke-width="1" shape-rendering="crispEdges"/>
<path d="M870.0 746 h7 v1 l-3 5 h-1 l-3 -5z" fill="#f00000"/>
<path d="M961.5 751 V762.5" stroke="#f00000" stroke-width="1" shape-rendering="crispEdges"/>
<path d="M958.0 746 h7 v1 l-3 5 h-1 l-3 -5z" fill="#f00000"/>
<path d="M1023.5 751 V769.5" stroke="#f00000" stroke-width="1" shape-rendering="crispEdges"/>
<path d="M1020.0 746 h7 v1 l-3 5 h-1 l-3 -5z" fill="#f00000"/>
<path d="M1085.5 751 V771" stroke="#f00000" stroke-width="1" shape-rendering="crispEdges"/>
<path d="M1082.0 746 h7 v1 l-3 5 h-1 l-3 -5z" fill="#f00000"/>
<rect x="12.5" y="731.5" width="178.5" height="14.0" fill="url(#lb)" stroke="#3a6ad8" stroke-width="1"/>
<text x="16.7" y="741.9" font-size="9.5" fill="#000" font-weight="normal" text-anchor="start" textLength="171" lengthAdjust="spacing">RSI - Relative Strength Index [61,19]</text>
<path d="M1375.5 755.3 h4" stroke="#3a6ad8" stroke-width="1.6"/>
<text x="1381" y="758.6999999999999" font-size="9.3" fill="#000" font-weight="normal" text-anchor="start">70</text>
<path d="M1375.5 774.5 h4" stroke="#3a6ad8" stroke-width="1.6"/>
<text x="1381" y="777.9" font-size="9.3" fill="#000" font-weight="normal" text-anchor="start">60</text>
<path d="M1375.5 794.2 h4" stroke="#3a6ad8" stroke-width="1.6"/>
<text x="1381" y="797.6" font-size="9.3" fill="#000" font-weight="normal" text-anchor="start">50</text>
<path d="M1375.5 813.3 h4" stroke="#3a6ad8" stroke-width="1.6"/>
<text x="1381" y="816.6999999999999" font-size="9.3" fill="#000" font-weight="normal" text-anchor="start">40</text>
<path d="M9 845 H25 V846 H26 V862 H25 V863 H9 V862 H8 V846 H9z" fill="#000"/>
<rect x="9" y="846" width="15.5" height="15.7" fill="url(#cr)"/>
<path d="M11 851 v-3 h3 M20 848 h3 v3 M11 857 v3 h3 M20 860 h3 v-3" stroke="#000" stroke-width="2" fill="none"/><rect x="14.5" y="851.5" width="5" height="5" fill="#fff" stroke="#c01010" stroke-width="1.2"/>
<text x="33.8" y="857.8" font-size="11" fill="#000" font-weight="normal" text-anchor="start" textLength="280" lengthAdjust="spacing">Pop-up menu available. Right-click to display pop-up menu.</text>
<rect x="0" y="865" width="1440" height="5" fill="#0434b8"/>
<rect x="0" y="870" width="1440" height="30" fill="url(#kp)"/>
<rect x="0" y="870" width="1440" height="1" fill="#1a3ea8"/>
<rect x="0" y="871" width="1440" height="2" fill="#4a90f0"/>
<rect x="0" y="873" width="1440" height="2" fill="#3a78e8" opacity="0.7"/>
<path d="M0 870 H92 Q101 870 101 885 Q101 900 92 900 H0z" fill="url(#start)"/>
<path d="M12 877 q3 -1 6 0.5 l-1 6 q-3 -1.5 -6 -0.5z" fill="#e8501a"/><path d="M19.5 878 q3 1 6.5 0 l-1 6 q-3 1 -6.5 0z" fill="#5cc020"/><path d="M10.5 884.5 q3 -1 6 0.5 l-1 6 q-3 -1.5 -6 -0.5z" fill="#3a7af0"/><path d="M18 885.5 q3 1 6.5 0 l-1 6 q-3 1 -6.5 0z" fill="#f0c010"/>
<text x="36" y="891" font-size="17" font-weight="bold" font-style="italic" fill="#1a4a1a" opacity="0.5" textLength="41" lengthAdjust="spacing">Inicio</text>
<text x="35" y="890.3" font-size="17" font-weight="bold" font-style="italic" fill="#ffffff" textLength="41" lengthAdjust="spacing">Inicio</text>
<rect x="113" y="874" width="158" height="23" rx="2" fill="#3c80f4"/>
<rect x="113" y="874" width="158" height="1" fill="#7aaaf8"/>
<circle cx="129.5" cy="885.5" r="7.5" fill="#e06a10"/><circle cx="131" cy="884" r="4.5" fill="#3050a0"/><path d="M123 888 q4 5 11 2 q-5 0 -6 -5 q-1 -4 3 -6 q-7 0 -8 9z" fill="#f09020"/>
<text x="142" y="889.3" font-size="11" fill="#ffffff" font-weight="normal" text-anchor="start" textLength="112" lengthAdjust="spacing">Consorcio Corredora ...</text>
<rect x="272" y="874" width="160" height="23" rx="2" fill="#1e4cc0"/>
<rect x="272" y="874" width="160" height="1.5" fill="#163a98"/>
<rect x="283" y="878" width="15" height="15" rx="1" fill="#ece8dc" stroke="#b8b0a0" stroke-width="0.8"/><path d="M291 880 q-3 2 -1 4 q1 1 -1 2" stroke="#e06010" stroke-width="1.3" fill="none"/><path d="M286 887 h9 M287 889 h7 M286 891 h9" stroke="#5060a0" stroke-width="0.9"/>
<text x="302.6" y="889.5" font-size="11" fill="#ffffff" font-weight="normal" text-anchor="start" textLength="110" lengthAdjust="spacing">Interactive Financial ...</text>
<rect x="1365.5" y="870" width="74.5" height="30" fill="url(#tray)"/>
<rect x="1365" y="870" width="1" height="30" fill="#0a3ab0"/>
<rect x="1329" y="879" width="16" height="14" fill="#3a64d8" opacity="0.6"/>
<text x="1331.5" y="889.8" font-size="10" fill="#ffffff" font-weight="normal" text-anchor="start" textLength="12" lengthAdjust="spacing">ES</text>
<circle cx="1365.6" cy="885.6" r="8" fill="#3a8ae8" stroke="#a0c8f8" stroke-width="1"/><path d="M1368 881.5 l-4 4 l4 4" stroke="#fff" stroke-width="2.2" fill="none"/>
<circle cx="1383.8" cy="884.9" r="7.5" fill="#d84a10"/><circle cx="1383.8" cy="884.9" r="4.5" fill="none" stroke="#fff" stroke-width="2"/><circle cx="1384.5" cy="884" r="2" fill="#f08020"/>
<text x="1402.5" y="888.8" font-size="10" fill="#ffffff" font-weight="normal" text-anchor="start" textLength="20.5" lengthAdjust="spacing">1:28</text>
</svg></body></html>
